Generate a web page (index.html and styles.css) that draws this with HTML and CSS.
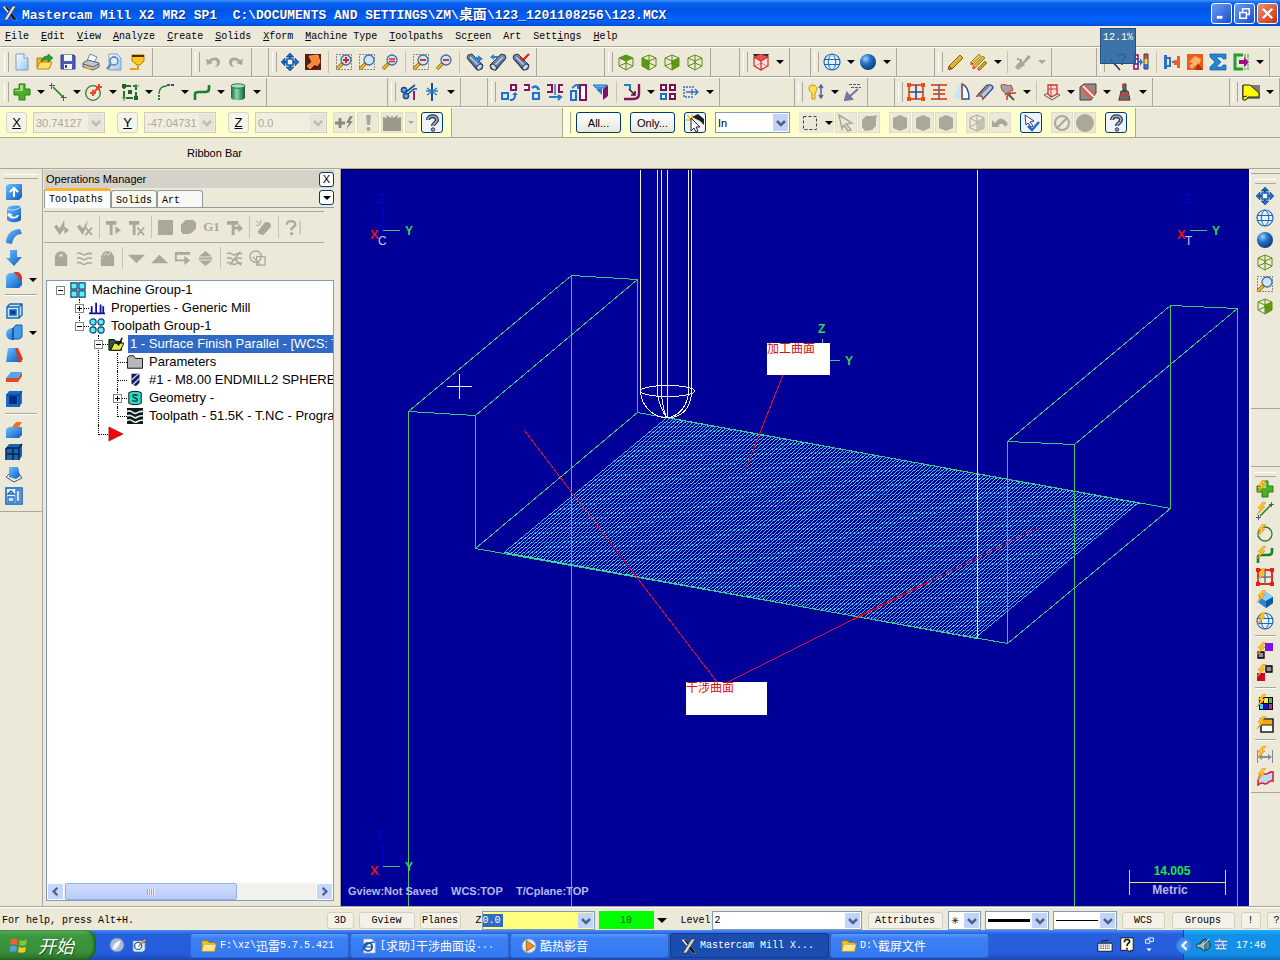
FILE: index.html
```html
<!DOCTYPE html>
<html lang="zh-CN">
  <head>
    <meta charset="utf-8">
    <meta name="viewport" content="width=device-width, initial-scale=1">
    <link rel="stylesheet" href="styles.css">
    <title>Mastercam Mill X2 MR2 SP1</title>
  </head>
  <body>
    <!-- icon sprite, every symbol is 18x18 -->
    <svg class="sprite" aria-hidden="true">
      <defs>
        <linearGradient id="gpage" x1="0" y1="0" x2="1" y2="1"><stop offset="0" stop-color="#fff"/><stop offset="1" stop-color="#9cc4f0"/></linearGradient>
        <radialGradient id="gball" cx=".35" cy=".3" r=".8"><stop offset="0" stop-color="#9fd0f8"/><stop offset=".4" stop-color="#2474c8"/><stop offset="1" stop-color="#06326e"/></radialGradient>
        <linearGradient id="gblue" x1="0" y1="0" x2="1" y2="1"><stop offset="0" stop-color="#6cc0ff"/><stop offset="1" stop-color="#0a5cc0"/></linearGradient>
        <linearGradient id="gcyl" x1="0" y1="0" x2="1" y2="0"><stop offset="0" stop-color="#0c6c3c"/><stop offset=".4" stop-color="#8cd4a8"/><stop offset="1" stop-color="#0c5c34"/></linearGradient>
        <linearGradient id="gpen" x1="0" y1="0" x2="1" y2="1"><stop offset="0" stop-color="#ffe860"/><stop offset="1" stop-color="#b88400"/></linearGradient>
      </defs>
      <symbol id="new" viewBox="0 0 18 18"><path d="M3 1h8l4 4v12H3z" fill="url(#gpage)" stroke="#7a9ccc"/><path d="M11 1v4h4" fill="#fff" stroke="#7a9ccc"/></symbol>
      <symbol id="open" viewBox="0 0 18 18"><path d="M1 15V5h5l1 2h7v8z" fill="#f0b828" stroke="#b07c10"/><path d="M1 16l3-7h12l-3 7z" fill="#ffe070" stroke="#c08c18"/><path d="M5 9c1-5 4-6 7-6V1l5 4-5 4V6c-3 0-5 1-7 3z" fill="#30a030" stroke="#186818" stroke-width=".6"/></symbol>
      <symbol id="save" viewBox="0 0 18 18"><path d="M2 2h13l1 1v13H2z" fill="#5058b8" stroke="#303890"/><path d="M5 2h8v6H5zM5 11h8v5H5z" fill="#f4f6ff"/><path d="M6 12h2v3H6z" fill="#303890"/></symbol>
      <symbol id="print" viewBox="0 0 18 18"><path d="M5 8l3-7 7 3-3 6z" fill="#fff" stroke="#6888b8"/><path d="M1 10l5-3 11 3v4l-6 3-10-3z" fill="#c0c4cc" stroke="#585c68"/><path d="M1 11l10 3 6-3" fill="none" stroke="#585c68"/><path d="M3 14l6 2" stroke="#f0b020" stroke-width="1.5"/></symbol>
      <symbol id="preview" viewBox="0 0 18 18"><path d="M4 1h8l4 4v12H4z" fill="url(#gpage)" stroke="#7a9ccc"/><circle cx="9" cy="8" r="4" fill="#d8ecff" stroke="#4878a8" stroke-width="1.3"/><path d="M6 11l-4 5" stroke="#6888a8" stroke-width="2.5"/></symbol>
      <symbol id="plug" viewBox="0 0 18 18"><path d="M4 2h12v6l-4 4H9L4 8z" fill="#ffc820" stroke="#c07800"/><path d="M4 2h12v2H4z" fill="#503000"/><path d="M10 12v4H2" fill="none" stroke="#e8a010" stroke-width="2"/></symbol>
      <symbol id="undo" viewBox="0 0 18 18"><path d="M2 6l1 6 6-2-2-1c3-3 6-2 6 1 0 2-1 3-3 4 5 0 6-3 6-5 0-5-7-6-11-2z" fill="#aca899"/></symbol>
      <symbol id="redo" viewBox="0 0 18 18"><path d="M16 6l-1 6-6-2 2-1c-3-3-6-2-6 1 0 2 1 3 3 4-5 0-6-3-6-5 0-5 7-6 11-2z" fill="#aca899"/></symbol>
      <symbol id="fit" viewBox="0 0 18 18"><path d="M9 0l4 4H5zM9 18l4-4H5zM0 9l4-4v8zM18 9l-4-4v8zM8 3h2v3H8zM8 12h2v3H8zM3 8h3v2H3zM12 8h3v2h-3z" fill="#1c74d0" stroke="#0c3c80" stroke-width=".6"/><path d="M6 6h6v6H6z" fill="#f0f8ff" stroke="#1860b8" stroke-width="1.600"/></symbol>
      <symbol id="repaint" viewBox="0 0 18 18"><rect x="1" y="1" width="16" height="16" fill="#5c1c10"/><path d="M5 3l9-1 2 7-3 4-2-2-5 5-3-3 5-4z" fill="#ff8430" stroke="#ffc090" stroke-width=".6"/></symbol>
      <symbol id="glass" viewBox="0 0 18 18"><circle cx="11" cy="7" r="5" fill="#cce6fc" stroke="#4070a8" stroke-width="1.3"/><path d="M8 10l-6 6" stroke="#8c6410" stroke-width="3.4"/><path d="M7 11l-5 5" stroke="#f4b838" stroke-width="2"/></symbol>
      <symbol id="dots" viewBox="0 0 18 18"><path d="M1.500 1.500h15v15h-15z" fill="none" stroke="#202840" stroke-dasharray="1 2"/></symbol>
      <symbol id="zwin" viewBox="0 0 18 18"><use href="#dots"/><use href="#glass"/><path d="M8 7h6M11 4v6" stroke="#e02020" stroke-width="2"/></symbol>
      <symbol id="ztar" viewBox="0 0 18 18"><use href="#dots"/><use href="#glass"/></symbol>
      <symbol id="zprev" viewBox="0 0 18 18"><use href="#glass"/><path d="M8 6h6M8 8.500h6" stroke="#e02020" stroke-width="1.500"/></symbol>
      <symbol id="zout" viewBox="0 0 18 18"><use href="#dots"/><use href="#glass"/><path d="M8 7h6" stroke="#e03020" stroke-width="2"/></symbol>
      <symbol id="zhalf" viewBox="0 0 18 18"><use href="#glass"/><path d="M8 7h6" stroke="#e03020" stroke-width="2"/></symbol>
      <symbol id="scope" viewBox="0 0 18 18"><path d="M1 5l1-3 4-1 11 11-1 4-5 1z" fill="#6c84a8" stroke="#303c50"/><path d="M4 4l8 8" stroke="#b8cce4" stroke-width="1.500"/><path d="M2 6l9 10" stroke="#3c5074" stroke-width="1.500"/><ellipse cx="13.500" cy="14" rx="3.300" ry="2.300" transform="rotate(-45 13.500 14)" fill="#c4dcf4" stroke="#303c50"/></symbol>
      <symbol id="scope1" viewBox="0 0 18 18"><use href="#scope"/><path d="M8 4h4V2l5 4-5 3V7H9z" fill="#2880d8"/></symbol>
      <symbol id="scope2" viewBox="0 0 18 18"><use href="#scope" transform="matrix(-1 0 0 1 18 0)"/><path d="M9 3H5V1L1 4l4 3V5h4z" fill="#2880d8"/></symbol>
      <symbol id="scope3" viewBox="0 0 18 18"><use href="#scope"/><path d="M8 4l3 3 6-6" fill="none" stroke="#d02010" stroke-width="2"/></symbol>
      <symbol id="wire" viewBox="0 0 18 18"><path d="M2 5l7-3 7 3v8l-7 4-7-4zM2 5l7 3 7-3M9 8v9M9 2v8M2 13l7-3 7 3" fill="none" stroke="#5c8c14"/></symbol>
      <symbol id="ctop" viewBox="0 0 18 18"><path d="M2 5l7-3 7 3-7 3z" fill="#5c9c10"/><use href="#wire"/></symbol>
      <symbol id="cfront" viewBox="0 0 18 18"><path d="M2 5l7 3v9l-7-4z" fill="#5c9c10"/><use href="#wire"/></symbol>
      <symbol id="cright" viewBox="0 0 18 18"><path d="M16 5L9 8v9l7-4z" fill="#5c9c10"/><use href="#wire"/></symbol>
      <symbol id="cred" viewBox="0 0 18 18"><path d="M1 1h16l-2 4H3z" fill="#303030"/><path d="M2 4l7-3 7 3-7 4z" fill="#f05050"/><path d="M2 4l7 4 7-4v9l-7 4-7-4zM9 8v9" fill="#fbe0dc" stroke="#c83030" stroke-width="1.2"/><path d="M3 13l6-3 6 3" fill="none" stroke="#c83030" stroke-dasharray="1 1"/></symbol>
      <symbol id="globe" viewBox="0 0 18 18"><circle cx="9" cy="9" r="8" fill="#e4f0fc" stroke="#1c68b8" stroke-width="1.2"/><path d="M1 6.500h16M1 11.500h16M9 1c-5 3-5 13 0 16M9 1c5 3 5 13 0 16" fill="none" stroke="#1c68b8"/></symbol>
      <symbol id="ball" viewBox="0 0 18 18"><circle cx="9" cy="9" r="8" fill="url(#gball)"/></symbol>
      <symbol id="pencil" viewBox="0 0 18 18"><path d="M2 13L13 2l3 3L5 16z" fill="url(#gpen)" stroke="#806000"/><path d="M2 13l3 3-3 1-1-1z" fill="#e05848" stroke="#802018" stroke-width=".6"/></symbol>
      <symbol id="pencils" viewBox="0 0 18 18"><path d="M1 9l8-8 2 2-8 8zM3 13L13 3l2 2L5 15zM8 15l7-7 2 2-7 7z" fill="url(#gpen)" stroke="#806000" stroke-width=".7"/><path d="M1 9l2 2-2 1zM3 13l2 2-2 1zM8 15l2 2-2 0z" fill="#e04838" stroke="#e04838"/></symbol>
      <symbol id="brush" viewBox="0 0 18 18"><path d="M1 14l6-7 2 2 5-7 3 2-7 7 1 2H9l-5 4z" fill="#aca899"/><path d="M5 7h3M3 6h2" stroke="#aca899" stroke-width="2"/></symbol>
      <symbol id="anpos" viewBox="0 0 18 18"><path d="M1 6l10 11M9 4c1-4 7-4 7 0 0 3-3 2-3 5M12 11h2" fill="none" stroke="#283858" stroke-width="1.6"/></symbol>
      <symbol id="match" viewBox="0 0 18 18"><path d="M2 2h4v14H2zM2 6h4M2 11h4" fill="#fff" stroke="#801060" stroke-width="1.5"/><path d="M12 1h4v5h-4z" fill="#f04030"/><path d="M12 6h4v5h-4z" fill="#f8e030"/><path d="M12 11h4v5h-4z" fill="#3080e0"/><path d="M12 1h4v15h-4z" fill="none" stroke="#304060"/><path d="M6 8h2V5l3 4-3 4v-3H6z" fill="#2878d0"/></symbol>
      <symbol id="hmark" viewBox="0 0 18 18"><path d="M1 2h3v14H1zM4 4h4v2H4zM4 12h4v2H4z" fill="#2c70c8"/><path d="M7 6v6M9 9h4" stroke="#2c70c8" stroke-width="2"/><path d="M14 3h3v12h-3v-3h-3V7h3z" fill="#e86030"/></symbol>
      <symbol id="fox" viewBox="0 0 18 18"><rect x="1" y="1" width="16" height="16" fill="#e85c18"/><path d="M3 9l6-6 6 3-2 7-3-1-4 4-3-3 4-3z" fill="#ffb068"/><path d="M12 10l5 7H9z" fill="#b83008"/></symbol>
      <symbol id="sigma" viewBox="0 0 18 18"><path d="M1 1h16v5h-3l-1-2H7l5 5-5 5h6l1-2h3v5H1v-3l5-5-5-5z" fill="#2484d8" stroke="#1058a8" stroke-width=".7"/></symbol>
      <symbol id="ebox" viewBox="0 0 18 18"><path d="M11 2H3v14h8" fill="none" stroke="#20a030" stroke-width="3"/><path d="M12 2h5M12 16h5M16 3v4M16 11v4M13 3v3M13 12v3" stroke="#20a030" stroke-dasharray="2 1"/><path d="M7 7h5V4l5 5-5 5v-3H7z" fill="#a01080"/></symbol>
      <symbol id="plus" viewBox="0 0 18 18"><path d="M6 1h6v5h5v6h-5v5H6v-5H1V6h5z" fill="#4caf2c" stroke="#2c7c14"/><path d="M7 2h3v6H2V7h5z" fill="#a4e080"/></symbol>
      <symbol id="line" viewBox="0 0 18 18"><path d="M4 4l10 10" stroke="#208020" stroke-width="1.600"/><path d="M0 2.500h6M2.500 0v6M12 14.500h6M14.500 12v6" stroke="#505878"/></symbol>
      <symbol id="circ" viewBox="0 0 18 18"><circle cx="8" cy="10" r="7.3" fill="none" stroke="#2c7c2c" stroke-width="1.3"/><path d="M8 7v6M5 10h6M14 1v6M11 4h6M8 10l6-6" stroke="#f04420" stroke-width="2"/></symbol>
      <symbol id="rect" viewBox="0 0 18 18"><path d="M3 3h12v12H3z" fill="none" stroke="#187828" stroke-width="2" stroke-dasharray="7 2"/><path d="M1 1h4v4H1zM13 13h4v4h-4zM7 7h4v4H7z" fill="#206030"/><path d="M1 15h5M3 13v5M13 3h5M15 1v4" stroke="#409040"/></symbol>
      <symbol id="fillet" viewBox="0 0 18 18"><path d="M2 17v-6" stroke="#208030" stroke-width="2" stroke-dasharray="2 1"/><path d="M2 11c0-5 3-8 8-8" fill="none" stroke="#208030" stroke-width="1.300"/><path d="M10 2h8" stroke="#30509c" stroke-width="2" stroke-dasharray="3 1"/></symbol>
      <symbol id="spline" viewBox="0 0 18 18"><path d="M2 17v-6c0-2 2-2 4-2h6c3 0 4-1 4-3V2" fill="none" stroke="#188028" stroke-width="2.6"/></symbol>
      <symbol id="cyl" viewBox="0 0 18 18"><path d="M2 3v12c2 3 12 3 14 0V3z" fill="url(#gcyl)"/><ellipse cx="9" cy="3" rx="7" ry="2.2" fill="#a8e0b8" stroke="#207848"/></symbol>
      <symbol id="trim" viewBox="0 0 18 18"><circle cx="4" cy="7" r="2.6" fill="#70a8e0" stroke="#184c98" stroke-width="1.5"/><circle cx="6" cy="13" r="2.6" fill="#70a8e0" stroke="#184c98" stroke-width="1.5"/><path d="M6 9l9-7M8 11l6-5h3" stroke="#184c98" stroke-width="1.6" fill="none"/><path d="M14 8v9" stroke="#902070" stroke-width="2"/></symbol>
      <symbol id="brk" viewBox="0 0 18 18"><path d="M9 0v18" stroke="#184c98" stroke-width="2"/><path d="M4 5l10 7M14 5L4 12M3 8h12" stroke="#3080c8" stroke-width="1.4"/></symbol>
      <symbol id="xmove" viewBox="0 0 18 18"><path d="M2 10h6v6H2z" fill="#d8ecff" stroke="#1c70d0" stroke-width="2"/><path d="M11 2h5v5h-5z" fill="#fff" stroke="#881060" stroke-width="2"/><path d="M10 16c4 0 4-2 4-4h-2l3-3 3 3h-2c0 4-2 6-6 6z" fill="#1c70d0"/></symbol>
      <symbol id="xrot" viewBox="0 0 18 18"><path d="M1 2h5v5H1" fill="#fff" stroke="#881060" stroke-width="1.8"/><path d="M10 10h6v6h-6z" fill="#d8ecff" stroke="#1c70d0" stroke-width="2"/><path d="M9 5c3-3 6-1 7 2" fill="none" stroke="#2878d0" stroke-width="2.5"/></symbol>
      <symbol id="xmir" viewBox="0 0 18 18"><path d="M1 2h5v7H1M17 2h-4v7h4" fill="none" stroke="#881060" stroke-width="2"/><path d="M9 1v11" stroke="#2878d0" stroke-width="1.5"/><path d="M3 14h11M12 12l3 2-3 3" stroke="#2878d0" stroke-width="2" fill="none"/></symbol>
      <symbol id="xscale" viewBox="0 0 18 18"><path d="M2 8h5v9H2z" fill="#d8ecff" stroke="#1c70d0" stroke-width="2"/><path d="M11 2h6v15h-6z" fill="#fff" stroke="#881060" stroke-width="2"/><path d="M3 5l4-3h2v4" fill="none" stroke="#2878d0" stroke-width="2"/></symbol>
      <symbol id="xoff" viewBox="0 0 18 18"><path d="M1 2h14l-4 3H4z" fill="#60b0f0" stroke="#1c70d0"/><path d="M4 6l6-1v7z" fill="#2878d0"/><path d="M11 6l5-4v11l-5 4z" fill="#801070"/></symbol>
      <symbol id="xroll" viewBox="0 0 18 18"><path d="M1 2h6v5" fill="none" stroke="#2878d0" stroke-width="2"/><path d="M16 1v10c0 4-3 5-6 5H1" fill="none" stroke="#881060" stroke-width="2.4"/><path d="M6 6l6 6M12 8v4H8" fill="none" stroke="#501040" stroke-width="1.6"/></symbol>
      <symbol id="xarr" viewBox="0 0 18 18"><path d="M2 2h5v5H2zM11 2h5v5h-5zM11 11h5v5h-5z" fill="#fff" stroke="#781050" stroke-width="2"/><path d="M2 11h5v5H2z" fill="#fff" stroke="#1c70d0" stroke-width="2"/></symbol>
      <symbol id="xdrag" viewBox="0 0 18 18"><path d="M12 4H2v10h10" fill="none" stroke="#3070c0" stroke-width="1.5" stroke-dasharray="2 1"/><path d="M4 9h12M13 6l3 3-3 3M10 6v6" fill="none" stroke="#3070c0" stroke-width="1.3"/></symbol>
      <symbol id="bulb" viewBox="0 0 18 18"><path d="M5 2c6 0 6 5 3 8v6H5v-6C1 8 1 2 5 2z" fill="#ffe050" stroke="#c09820"/><path d="M14 2v13M12 5l2-3 2 3M12 12l2 3 2-3" stroke="#5068a0" stroke-width="1.5" fill="none"/></symbol>
      <symbol id="arrdash" viewBox="0 0 18 18"><path d="M6 1.500h12M8 4.500h10" stroke="#485890" stroke-dasharray="3 1"/><path d="M15 6l-9 8M2 17l2-7 5 6z" fill="#7078a0" stroke="#7078a0" stroke-width="2"/></symbol>
      <symbol id="snet" viewBox="0 0 18 18"><path d="M2 2h14v14H2z" fill="none" stroke="#e06030" stroke-width="2"/><path d="M0 0h4v4H0zM14 0h4v4h-4zM0 14h4v4H0zM14 14h4v4h-4z" fill="#e05020"/><path d="M9 2v14M2 9h14" stroke="#2848a0" stroke-width="1.6"/></symbol>
      <symbol id="sruled" viewBox="0 0 18 18"><path d="M1 2h16M1 16h16M3 7h12M3 11h12" stroke="#e85828" stroke-width="2"/><path d="M9 1v16" stroke="#606890" stroke-width="1.6"/></symbol>
      <symbol id="srev" viewBox="0 0 18 18"><path d="M2 16C2 8 4 3 9 1c1 5 1 10 0 15z" fill="#c8e4f8"/><path d="M9 1c6 2 7 8 7 15H9z" fill="#fff" stroke="#2050a0" stroke-width="1.5"/><path d="M9 1v16" stroke="#e05020" stroke-width="1.5"/></symbol>
      <symbol id="ssweep" viewBox="0 0 18 18"><path d="M1 13L10 3c3-2 7-1 7 2L7 16c0-3-3-4-6-3z" fill="#a8d0f0" stroke="#284c88" stroke-width="1.3"/><path d="M4 12l9-9M7 16c0-3-3-4-6-3" fill="none" stroke="#d85030" stroke-width="1.5"/></symbol>
      <symbol id="strim" viewBox="0 0 18 18"><path d="M2 2c4-2 6 2 10 0l2 5c-3 1-4 3-7 4-2-2-5-3-5-9z" fill="#a0a4a8" stroke="#c04030"/><path d="M6 12c3-3 7-2 11-2M8 17c-1-5 3-7 7-7" stroke="#c04030" fill="none" stroke-width="1.5"/><path d="M10 12l5 5" stroke="#505860" stroke-width="2"/></symbol>
      <symbol id="m1" viewBox="0 0 18 18"><path d="M1 12l8-4 8 4-8 5z" fill="#e0e0d8" stroke="#606060"/><path d="M5 2h9v9l-6 3-3-3z" fill="#f8e0d8" stroke="#c83828" stroke-width="1.3"/><path d="M5 6h9M8 2v11" stroke="#c83828"/></symbol>
      <symbol id="m2" viewBox="0 0 18 18"><path d="M1 4l4-3h12v9l-5 7H1z" fill="#8c8c88" stroke="#404040"/><path d="M2 4l10 12M6 3l10 9" stroke="#e85c50" stroke-width="2.4"/><path d="M4 3l11 11" stroke="#fff" stroke-width="1.5"/></symbol>
      <symbol id="m3" viewBox="0 0 18 18"><path d="M8 1h3v7H8zM6 8h7l2 9H4z" fill="#686c70" stroke="#383838"/><path d="M5 12h9M8 1v4" stroke="#d83828" stroke-width="1.6"/><path d="M3 17h12" stroke="#d83828"/></symbol>
      <symbol id="mtool" viewBox="0 0 18 18"><rect width="18" height="14" y="2" fill="#7c7c7c"/><path d="M1 2h7l9 8v4H6l-2 3H1z" fill="#ffff00" stroke="#202020"/><path d="M1 14l4-1" stroke="#202020"/></symbol>
      <!-- disabled glyphs of the ribbon and the operations toolbar -->
      <symbol id="gfast" viewBox="0 0 18 18"><path d="M5 4v10M0 9h10" stroke="#8c897c" stroke-width="3"/><path d="M15 2l-4 7h3l-3 7 7-9h-3l3-5z" fill="#8c897c"/></symbol>
      <symbol id="gexc" viewBox="0 0 18 18"><path d="M7 1h5l-1 10H8z" fill="#aca899"/><circle cx="9.500" cy="15" r="2" fill="#aca899"/></symbol>
      <symbol id="gblk" viewBox="0 0 18 18"><path d="M0 3l4 1-1-3 5 3 1-3 1 3 5-3-1 3 4-1v14H0z" fill="#9c998a"/></symbol>
      <symbol id="quest" viewBox="0 0 18 18"><path d="M5 6c0-5 9-5 9 0 0 3-4 3-4 6" fill="none" stroke="#283048" stroke-width="4"/><path d="M5 6c0-5 9-5 9 0 0 3-4 3-4 6" fill="none" stroke="#a8b0c0" stroke-width="1.6"/><circle cx="10" cy="15.500" r="1.700" fill="#a8b0c0" stroke="#283048"/></symbol>
      <symbol id="magic" viewBox="0 0 18 18"><path d="M6 3l6-3 6 5v6l-4-4z" fill="#202020"/><path d="M1 1l5 5M6 0v5M0 6h5" stroke="#f0c020" stroke-width="1.5"/><path d="M5 4l9 9h-4l2 4-2 1-2-4-3 3z" fill="#fff" stroke="#202020"/></symbol>
      <symbol id="gbox" viewBox="0 0 18 18"><path d="M2.500 2.500h13v13h-13z" fill="none" stroke="#404040" stroke-dasharray="3 2"/></symbol>
      <symbol id="gcur" viewBox="0 0 18 18"><path d="M2 1l13 8-6 1 5 6-3 1-4-6-2 4z" fill="#ece9d8" stroke="#aca899" stroke-width="1.5"/></symbol>
      <symbol id="ghex" viewBox="0 0 18 18"><path d="M9 1l7 3v10l-7 3-7-3V4z" fill="#aca899"/></symbol>
      <symbol id="ghexp" viewBox="0 0 18 18"><path d="M6 2h7l4-1-1 4v7l-4 4-7 1-3-4V6z" fill="#aca899"/></symbol>
      <symbol id="gcube" viewBox="0 0 18 18"><path d="M9 1l7 3v10l-7 3-7-3V4zM9 8v9M2 4l7 4 7-4M9 1v8l-7 4" fill="none" stroke="#aca899"/><path d="M9 8l7-4v10l-7 3z" fill="#c4c0b0"/></symbol>
      <symbol id="gback" viewBox="0 0 18 18"><path d="M1 13V6l3 3c5-7 9-5 13 1l-3 3c-2-4-4-4-7-1l2 1z" fill="#aca899"/></symbol>
      <symbol id="selok" viewBox="0 0 18 18"><path d="M3 1l9 6-4 1 3 4-2 1-3-4-2 2z" fill="#fff" stroke="#304060"/><path d="M6 12l4 4 7-8" fill="none" stroke="#2868c8" stroke-width="2.500"/></symbol>
      <symbol id="gno" viewBox="0 0 18 18"><circle cx="9" cy="9" r="7" fill="none" stroke="#aca899" stroke-width="2"/><path d="M4 14L14 4" stroke="#aca899" stroke-width="2"/></symbol>
      <symbol id="gdot" viewBox="0 0 18 18"><circle cx="9" cy="9" r="9" fill="#aca899"/></symbol>
      <symbol id="ochk" viewBox="0 0 18 18"><path d="M1 8l3-2 3 4 5-9v9l-5 7zM12 8l5 4-5 4z" fill="#aca899"/></symbol>
      <symbol id="ochx" viewBox="0 0 18 18"><path d="M1 8l3-2 3 4 6-9-3 9-3 7z" fill="#aca899"/><path d="M10 9l7 8M17 9l-7 8" stroke="#aca899" stroke-width="2"/></symbol>
      <symbol id="otp" viewBox="0 0 18 18"><path d="M1 2h11v4H8v11H5V6H1zM11 8l6 4-6 4z" fill="#aca899"/></symbol>
      <symbol id="otx" viewBox="0 0 18 18"><path d="M1 2h11v4H8v11H5V6H1z" fill="#aca899"/><path d="M10 9l7 8M17 9l-7 8" stroke="#aca899" stroke-width="2"/></symbol>
      <symbol id="osq" viewBox="0 0 18 18"><path d="M1 1h16v16H1z" fill="#aca899"/></symbol>
      <symbol id="ocut" viewBox="0 0 18 18"><path d="M1 6l5-5h8l3 3v6l-4 4-3 2H3l-2-3z" fill="#aca899"/></symbol>
      <symbol id="otr" viewBox="0 0 18 18"><path d="M1 2h12v4H9v11H6V6H1zM9 8h4V5l5 5-5 4v-3H9z" fill="#aca899"/></symbol>
      <symbol id="oedit" viewBox="0 0 18 18"><path d="M3 13l8-10 5 1 1 4-8 9-5-1z" fill="#aca899"/><path d="M1 2l4 3M1 7l5-1M6 1v4" stroke="#aca899"/></symbol>
      <symbol id="oq" viewBox="0 0 18 18"><path d="M3 6c0-5 9-5 9 0 0 3-5 2-4 6" fill="none" stroke="#aca899" stroke-width="2.500"/><path d="M17 2v14" stroke="#aca899"/><circle cx="8" cy="15.500" r="1.700" fill="#aca899"/></symbol>
      <symbol id="olock" viewBox="0 0 18 18"><path d="M2 17V8c0-9 13-9 13 0v9z" fill="#aca899"/><path d="M6 7c1-4 4-4 5 0z" fill="#e0dccc"/></symbol>
      <symbol id="owave" viewBox="0 0 18 18"><path d="M1 4c4-3 6 3 9 1s4-2 7-1M1 9c4-3 6 3 9 1s4-2 7-1M1 14c4-3 6 3 9 1s4-2 7-1" fill="none" stroke="#aca899" stroke-width="1.600"/></symbol>
      <symbol id="owavex" viewBox="0 0 18 18"><use href="#owave"/><path d="M15 2L4 16M9 9l7 7" stroke="#aca899" stroke-width="1.600"/></symbol>
      <symbol id="oghost" viewBox="0 0 18 18"><path d="M2 17V7l3-5 4-1 4 1 3 5v10z" fill="#aca899"/><path d="M5 6l3-3M9 6l3-3M3 9l1-1" stroke="#fff"/></symbol>
      <symbol id="odn" viewBox="0 0 18 18"><path d="M0 5h18l-9 9z" fill="#aca899"/></symbol>
      <symbol id="oup" viewBox="0 0 18 18"><path d="M0 14h18L9 5z" fill="#aca899"/></symbol>
      <symbol id="oins" viewBox="0 0 18 18"><path d="M2 3v8h10" fill="none" stroke="#aca899" stroke-width="2"/><path d="M11 6l6 5-6 5zM1 2h16v3H1z" fill="#aca899"/></symbol>
      <symbol id="oscr" viewBox="0 0 18 18"><path d="M2 7l7-6 7 6zM2 11l7 6 7-6zM2 8h14v2H2z" fill="#aca899"/></symbol>
      <symbol id="oov" viewBox="0 0 18 18"><circle cx="7" cy="7" r="6" fill="none" stroke="#aca899" stroke-width="1.500"/><path d="M8 7h9v9H8zM4 7l8 9" fill="none" stroke="#aca899" stroke-width="1.300"/></symbol>
      <!-- solids -->
      <symbol id="sext" viewBox="0 0 18 18"><path d="M1 3l3-2h13v13l-3 3H1z" fill="url(#gblue)"/><path d="M9 14V6M5 9l4-4 4 4" fill="none" stroke="#fff" stroke-width="2"/></symbol>
      <symbol id="srevo" viewBox="0 0 18 18"><path d="M2 3c4-3 11-3 14-1v13c-4 3-10 3-14 0z" fill="url(#gblue)"/><path d="M4 10c2 4 8 3 9 0M3 11l1-2 3 1" fill="none" stroke="#fff" stroke-width="1.800"/><path d="M2 4c4 2 10 1 14-2" stroke="#c8e4ff" fill="none"/></symbol>
      <symbol id="sswp" viewBox="0 0 18 18"><path d="M1 16C1 7 7 2 15 2l2 5c-6 0-9 4-10 10z" fill="url(#gblue)"/></symbol>
      <symbol id="sloft" viewBox="0 0 18 18"><path d="M5 1h7v7h5l-8 9-8-8h4z" fill="url(#gblue)"/></symbol>
      <symbol id="sfil" viewBox="0 0 18 18"><path d="M1 5l3-3h10l3 5v7l-3 3H1z" fill="url(#gblue)"/><path d="M8 1h5c3 1 4 4 4 7l-3 2c0-4-2-7-6-9z" fill="#e03020"/></symbol>
      <symbol id="sshl" viewBox="0 0 18 18"><path d="M2 5l3-3h12v11l-3 3H2zM2 5h12v11M14 5l3-3" fill="#cce6ff" stroke="#1868b8" stroke-width="1.400"/><path d="M5 8h6v5H5z" fill="#083c90" stroke="#1868b8" stroke-width="1.500"/></symbol>
      <symbol id="sbool" viewBox="0 0 18 18"><circle cx="7" cy="10" r="6" fill="url(#gblue)"/><path d="M8 4l3-3h6v12l-3 2H8z" fill="#409ce8" stroke="#1060b0"/><path d="M8 4v12" stroke="#083c80"/></symbol>
      <symbol id="sdraft" viewBox="0 0 18 18"><path d="M3 2h8l6 14H1z" fill="url(#gblue)"/><path d="M10 2l3 0 5 11-4 4z" fill="#d83828"/></symbol>
      <symbol id="sthk" viewBox="0 0 18 18"><path d="M6 4h11l-4 6H1z" fill="#50a8f0"/><path d="M1 10h12l4-6v4l-4 6H1z" fill="#e04828"/></symbol>
      <symbol id="schk" viewBox="0 0 18 18"><path d="M1 5l3-4h13v12l-3 4H1z" fill="#186cc8"/><path d="M4 6h8v8H4z" fill="#042c80"/><path d="M1 5h13v12M14 5l3-4" fill="none" stroke="#083878"/></symbol>
      <symbol id="slift" viewBox="0 0 18 18"><path d="M1 8l3-2h13v8l-3 3H1z" fill="url(#gblue)"/><path d="M7 6l4-5h6l-4 6z" fill="#f07028"/></symbol>
      <symbol id="sgrid" viewBox="0 0 18 18"><path d="M1 5l3-4h13v12l-3 4H1z" fill="#1c64b0"/><path d="M1 5h13v12M14 5l3-4M8 5v12M1 11h13M1 5v12" fill="none" stroke="#06264c" stroke-width="1.500"/></symbol>
      <symbol id="sdwn" viewBox="0 0 18 18"><path d="M4 9l-3 3 8 5 8-4-3-4" fill="none" stroke="#405c80"/><path d="M4 2h9l2 9-4 3-7-2z" fill="url(#gblue)"/></symbol>
      <symbol id="slay" viewBox="0 0 18 18"><rect x="1" y="1" width="16" height="16" fill="#e8f4ff" stroke="#1868c0" stroke-width="1.600"/><path d="M3 10h6v5H3zM3 7l3-3 3 3zM11 3h4v12h-4z" fill="#c8e4fc" stroke="#1868c0" stroke-width="1.300"/></symbol>
      <!-- lightning prefix, used over the quick toolbar -->
      <symbol id="bolt" viewBox="0 0 18 18"><path d="M7 0L2 6h3l-4 7 8-8H6l4-5z" fill="#ffd020" stroke="#d88020" stroke-width=".6"/></symbol>
      <symbol id="qplus" viewBox="0 0 18 18"><use href="#plus"/><use href="#bolt"/></symbol>
      <symbol id="qline" viewBox="0 0 18 18"><path d="M4 14L15 3" stroke="#208020" stroke-width="1.500"/><path d="M0 15.500h5M2.500 13v5M13 2.500h5M15.500 0v5" stroke="#505878"/><use href="#bolt"/></symbol>
      <symbol id="qcirc" viewBox="0 0 18 18"><circle cx="9" cy="10" r="7" fill="none" stroke="#2c7c2c" stroke-width="1.300"/><use href="#bolt"/></symbol>
      <symbol id="qspl" viewBox="0 0 18 18"><use href="#spline"/><use href="#bolt"/></symbol>
      <symbol id="qnet" viewBox="0 0 18 18"><path d="M2 2h14v14H2z" fill="none" stroke="#e02828" stroke-width="2"/><path d="M0 0h4v4H0zM14 0h4v4h-4zM0 14h4v4H0zM14 14h4v4h-4z" fill="#e02020"/><path d="M9 2v14M2 9h14" stroke="#707070" stroke-width="1.500"/><use href="#bolt"/></symbol>
      <symbol id="qsol" viewBox="0 0 18 18"><path d="M3 7l7-5 7 5v6l-7 5-7-5z" fill="#2c84d8"/><path d="M3 7l7-5 7 5-7 4z" fill="#90ccf8"/><path d="M10 11l7-4v6l-7 5z" fill="#1058a8"/><use href="#bolt"/></symbol>
      <symbol id="qglobe" viewBox="0 0 18 18"><use href="#globe"/><use href="#bolt"/></symbol>
      <symbol id="qc1" viewBox="0 0 18 18"><path d="M9 1h8v8H9z" fill="#8010f0"/><path d="M2 10h6v6H2z" fill="#909090" stroke="#000" stroke-width="1.300"/><use href="#bolt"/></symbol>
      <symbol id="qc2" viewBox="0 0 18 18"><path d="M10 2h6v6h-6z" fill="#909090" stroke="#000" stroke-width="1.300"/><path d="M1 9h8v8H1z" fill="#c80828"/><use href="#bolt"/></symbol>
      <symbol id="qpal" viewBox="0 0 18 18"><path d="M3 3h14v13H3z" fill="#000"/><path d="M4 4h3v5H4z" fill="#f04000"/><path d="M8 4h4v5H8z" fill="#f8f040"/><path d="M13 4h3v5h-3z" fill="#50c830"/><path d="M4 10h3v5H4z" fill="#30d8f0"/><path d="M8 10h4v5H8z" fill="#1010e0"/><path d="M13 10h3v5h-3z" fill="#c020c0"/><use href="#bolt"/></symbol>
      <symbol id="qlev" viewBox="0 0 18 18"><path d="M5 3h12v13H5z" fill="#fff" stroke="#202020" stroke-width="1.600"/><path d="M6 4h10v5H6z" fill="#f8a810"/><path d="M5 9h12" stroke="#202020"/><use href="#bolt"/></symbol>
      <symbol id="qdim" viewBox="0 0 18 18"><path d="M1.500 4v13M16.500 4v13" stroke="#808898"/><path d="M2 11l4-3v2h6V8l4 3-4 3v-2H6v2z" fill="#8090a8"/><use href="#bolt"/></symbol>
      <symbol id="qsurf" viewBox="0 0 18 18"><path d="M2 14c0-5 3-9 7-8 3 1 4-3 8-2v9c-3-2-4 3-8 3-3-2-5-1-7 1z" fill="#b8dcf8" stroke="#d82038" stroke-width="1.600"/><use href="#bolt"/></symbol>
      <!-- tree -->
      <symbol id="tgrp" viewBox="0 0 18 18"><path d="M1 1h7v7H1zM10 1h7v7h-7zM1 10h7v7H1zM10 10h7v7h-7z" fill="#60f0f8" stroke="#084068" stroke-width="1.300"/></symbol>
      <symbol id="tprop" viewBox="0 0 18 18"><path d="M0 15h18M3 15V7M8 15V3M13 15V5M16 15V7" stroke="#1010a0" stroke-width="2"/></symbol>
      <symbol id="ttp" viewBox="0 0 18 18"><g fill="#60e8f8" stroke="#084068" stroke-width="1.300"><circle cx="4.500" cy="4.500" r="3.500"/><circle cx="13.500" cy="4.500" r="3.500"/><circle cx="4.500" cy="13.500" r="3.500"/><circle cx="13.500" cy="13.500" r="3.500"/></g></symbol>
      <symbol id="tfold" viewBox="0 0 18 18"><path d="M1 16V4h6l2 2h6v10z" fill="#305830" stroke="#000"/><path d="M3 16l4-8h11l-4 8z" fill="#e8e840" stroke="#000"/><path d="M9 7l3 3 4-8" fill="none" stroke="#000" stroke-width="1.600"/></symbol>
      <symbol id="tpar" viewBox="0 0 18 18"><path d="M0.500 16V4l2-2h5l2 3h8v11z" fill="#b8b8b8" stroke="#000"/></symbol>
      <symbol id="ttool" viewBox="0 0 18 18"><path d="M5 2h9v10l-4 4-5-3z" fill="#101860"/><path d="M5 9l8-7M7 14l7-7" stroke="#d0d0e8" stroke-width="1.500"/></symbol>
      <symbol id="tgeo" viewBox="0 0 18 18"><path d="M2 3c3-2 11-2 14 0v12c-3 2-11 2-14 0z" fill="#30d8c8" stroke="#000"/><path d="M12 6c-6-2-7 2-3 3s4 5-3 3" fill="none" stroke="#003838" stroke-width="1.500"/></symbol>
      <symbol id="twave" viewBox="0 0 18 18"><path d="M0 0h18v18H0z" fill="#101818"/><path d="M0 4c5-3 7 3 10 2s4-3 8-2M0 9c5-3 7 3 10 2s4-3 8-2M0 14c5-3 7 3 10 2s4-3 8-2" fill="none" stroke="#e0f0f0" stroke-width="1.800"/></symbol>
      <symbol id="tarr" viewBox="0 0 18 18"><path d="M1 1l16 8-16 8z" fill="#f00808" stroke="#700" stroke-width=".6"/></symbol>
      <!-- task bar -->
      <symbol id="mcx" viewBox="0 0 18 18"><path d="M1 2h5l11 15h-4z" fill="#101010" stroke="#a0a8b0" stroke-width=".6"/><path d="M16 1l-4 0L2 17h4z" fill="#d8dce0" stroke="#303030" stroke-width=".8"/><path d="M2 2l5 6" stroke="#fff" stroke-width="1.500"/></symbol>
      <symbol id="folder" viewBox="0 0 18 18"><path d="M1 15V3h6l2 2h7v10z" fill="#f0c040" stroke="#a07810"/><path d="M1 15l2-8h14l-2 8z" fill="#ffe890" stroke="#c09828" stroke-width=".8"/></symbol>
      <symbol id="ie" viewBox="0 0 18 18"><path d="M3 1h9l4 4v12H3z" fill="#fff" stroke="#90a0b8"/><circle cx="8" cy="10" r="4.500" fill="none" stroke="#1858b0" stroke-width="2.200"/><path d="M4 10h8M1 14C4 8 10 4 15 5" stroke="#1858b0" stroke-width="1.600" fill="none"/></symbol>
      <symbol id="media" viewBox="0 0 18 18"><circle cx="9" cy="9" r="8" fill="#d8ecf8" stroke="#7898b0"/><path d="M6 3l9 6-9 6z" fill="#f09020" stroke="#b05808"/></symbol>
      <symbol id="win" viewBox="0 0 18 18"><path d="M1 4c3-2 5-1 7 0L7 9C5 8 3 8 0 9z" fill="#f06028"/><path d="M10 4c2 1 4 1 7-1l-1 6c-3 1-5 1-7 0z" fill="#80c838"/><path d="M0 11c3-2 5-1 7 0l-1 5c-2-1-4-1-6 0z" fill="#50a0f0"/><path d="M9 11c2 1 4 1 7 0l-1 5c-3 1-5 1-7 0z" fill="#f8c828"/></symbol>
      <symbol id="bird" viewBox="0 0 18 18"><circle cx="9" cy="9" r="8" fill="#a8bcd8" stroke="#607ca8"/><path d="M4 14c0-6 5-9 9-10-1 5-3 9-7 10z" fill="#eef4fc"/></symbol>
      <symbol id="desk" viewBox="0 0 18 18"><path d="M2 4h11l3 3v8l-3 2H4l-2-2z" fill="#d8ecf8" stroke="#406c98"/><circle cx="8" cy="10" r="4" fill="#fff" stroke="#1868b0" stroke-width="1.500"/><path d="M8 11l7-9 2 2z" fill="#f0a870" stroke="#804020" stroke-width=".6"/></symbol>
      <symbol id="kbd" viewBox="0 0 18 18"><path d="M1 7h16v9H1z" fill="#fff" stroke="#101010"/><path d="M3 9h12M3 11h12M3 13h12" stroke="#101010" stroke-dasharray="1 1"/><path d="M5 6c0-4 4 0 8-3" stroke="#101010" fill="none"/></symbol>
      <symbol id="qm" viewBox="0 0 18 18"><path d="M2 1h14v14h-3v2l-3-2H2z" fill="#ffffe0" stroke="#101010"/><path d="M6 6c0-4 6-4 6-1 0 2-3 2-3 5M9 12v2" fill="none" stroke="#101010" stroke-width="1.800"/></symbol>
      <symbol id="lang" viewBox="0 0 18 18"><path d="M5 3h5v4H5zM8 3V1h6v4h-4" fill="none" stroke="#fff"/><path d="M6 13h6l-3 3z" fill="#fff"/></symbol>
      <symbol id="vol" viewBox="0 0 18 18"><circle cx="10" cy="9" r="6" fill="#508c88" stroke="#183c50"/><path d="M1 8h4l5-6v14l-5-4H1z" fill="#a0c0c8" stroke="#203c58"/><path d="M8 9l7-7" stroke="#e8f8f8"/></symbol>
      <symbol id="wall" viewBox="0 0 18 18"><path d="M2 2h14v10l-7 5-7-5z" fill="#3880d0"/><path d="M2 5h14M2 9h14M3 13h12M7 2v3M11 5v4M6 9v4M12 9v4" stroke="#d8ecff" stroke-width="1.300"/></symbol>
    </svg>

    <header class="title">
      <svg class="i"><use href="#mcx"/></svg>
      <h1>Mastercam Mill X2 MR2 SP1&nbsp; C:\DOCUMENTS AND SETTINGS\ZM\<span>桌面</span>\123_1201108256\123.MCX</h1>
      <button class="wb" title="Minimize"><svg viewBox="0 0 18 18"><path d="M4 13h6" stroke="#fff" stroke-width="3"/></svg></button>
      <button class="wb" title="Restore"><svg viewBox="0 0 18 18"><path d="M4 8h7v6H4zM7 7V4h7v6h-3" fill="none" stroke="#fff" stroke-width="1.600"/></svg></button>
      <button class="wb close" title="Close"><svg viewBox="0 0 18 18"><path d="M4 4l10 10M14 4L4 14" stroke="#fff" stroke-width="2.400"/></svg></button>
    </header>

    <nav class="menu">
      <a href="#"><u>F</u>ile</a><a href="#"><u>E</u>dit</a><a href="#"><u>V</u>iew</a><a href="#"><u>A</u>nalyze</a><a href="#"><u>C</u>reate</a><a href="#"><u>S</u>olids</a><a href="#"><u>X</u>form</a><a href="#"><u>M</u>achine Type</a><a href="#"><u>T</u>oolpaths</a><a href="#">Sc<u>r</u>een</a><a href="#">Art</a><a href="#">Sett<u>i</u>ngs</a><a href="#"><u>H</u>elp</a>
      <div class="meter">12.1%</div>
    </nav>

    <div class="bar bar1">
      <div class="grp">
        <button class="b" title="New"><svg><use href="#new"/></svg></button>
        <button class="b" title="Open"><svg><use href="#open"/></svg></button>
        <button class="b" title="Save"><svg><use href="#save"/></svg></button>
        <button class="b" title="Print"><svg><use href="#print"/></svg></button>
        <button class="b" title="Preview"><svg><use href="#preview"/></svg></button>
        <button class="b" title="Convert"><svg><use href="#plug"/></svg></button>
      </div>
      <div class="grp">
        <button class="b" title="Undo" disabled><svg><use href="#undo"/></svg></button>
        <button class="b" title="Redo" disabled><svg><use href="#redo"/></svg></button>
      </div>
      <div class="grp">
        <button class="b" title="Fit"><svg><use href="#fit"/></svg></button>
        <button class="b" title="Repaint"><svg><use href="#repaint"/></svg></button>
        <i class="sep"></i>
        <button class="b" title="Zoom window"><svg><use href="#zwin"/></svg></button>
        <button class="b" title="Zoom target"><svg><use href="#ztar"/></svg></button>
        <button class="b" title="Zoom previous"><svg><use href="#zprev"/></svg></button>
        <i class="sep"></i>
        <button class="b" title="Unzoom"><svg><use href="#zout"/></svg></button>
        <button class="b" title="Unzoom 0.8"><svg><use href="#zhalf"/></svg></button>
        <i class="sep"></i>
        <button class="b" title="Dynamic rotate"><svg><use href="#scope1"/></svg></button>
        <button class="b" title="Previous view"><svg><use href="#scope2"/></svg></button>
        <button class="b" title="Named views"><svg><use href="#scope3"/></svg></button>
      </div>
      <div class="grp">
        <button class="b" title="Top"><svg><use href="#ctop"/></svg></button>
        <button class="b" title="Front"><svg><use href="#cfront"/></svg></button>
        <button class="b" title="Right"><svg><use href="#cright"/></svg></button>
        <button class="b" title="Isometric"><svg><use href="#wire"/></svg></button>
      </div>
      <div class="grp">
        <button class="b d" title="Planes"><svg><use href="#cred"/></svg></button>
      </div>
      <div class="grp">
        <button class="b d" title="Wireframe"><svg><use href="#globe"/></svg></button>
        <button class="b d" title="Shaded"><svg><use href="#ball"/></svg></button>
      </div>
      <div class="grp">
        <button class="b" title="Delete"><svg><use href="#pencil"/></svg></button>
        <button class="b d" title="Delete duplicates"><svg><use href="#pencils"/></svg></button>
        <i class="sep"></i>
        <button class="b d" title="Undelete" disabled><svg><use href="#brush"/></svg></button>
      </div>
      <div class="grp">
        <button class="b" title="Analyze"><svg><use href="#anpos"/></svg></button>
        <button class="b" title="Match"><svg><use href="#match"/></svg></button>
        <i class="sep"></i>
        <button class="b" title="Tool manager"><svg><use href="#hmark"/></svg></button>
        <button class="b" title="Hide"><svg><use href="#fox"/></svg></button>
        <button class="b" title="Statistics"><svg><use href="#sigma"/></svg></button>
        <button class="b d" title="Run"><svg><use href="#ebox"/></svg></button>
      </div>
    </div>

    <div class="bar bar2">
      <div class="grp">
        <button class="b d" title="Point"><svg><use href="#plus"/></svg></button>
        <button class="b d" title="Line"><svg><use href="#line"/></svg></button>
        <button class="b d" title="Arc"><svg><use href="#circ"/></svg></button>
        <button class="b d" title="Rectangle"><svg><use href="#rect"/></svg></button>
        <button class="b d" title="Fillet"><svg><use href="#fillet"/></svg></button>
        <button class="b d" title="Spline"><svg><use href="#spline"/></svg></button>
        <button class="b d" title="Primitive"><svg><use href="#cyl"/></svg></button>
      </div>
      <div class="grp">
        <button class="b" title="Trim"><svg><use href="#trim"/></svg></button>
        <button class="b d" title="Break"><svg><use href="#brk"/></svg></button>
      </div>
      <div class="grp">
        <button class="b" title="Translate"><svg><use href="#xmove"/></svg></button>
        <button class="b" title="Rotate"><svg><use href="#xrot"/></svg></button>
        <button class="b" title="Mirror"><svg><use href="#xmir"/></svg></button>
        <button class="b" title="Scale"><svg><use href="#xscale"/></svg></button>
        <button class="b" title="Project"><svg><use href="#xoff"/></svg></button>
        <i class="sep"></i>
        <button class="b d" title="Offset"><svg><use href="#xroll"/></svg></button>
        <button class="b" title="Array"><svg><use href="#xarr"/></svg></button>
        <button class="b d" title="Drag"><svg><use href="#xdrag"/></svg></button>
      </div>
      <div class="grp">
        <button class="b d" title="Drafting"><svg><use href="#bulb"/></svg></button>
        <button class="b" title="Leader"><svg><use href="#arrdash"/></svg></button>
      </div>
      <div class="grp">
        <button class="b" title="Net surface"><svg><use href="#snet"/></svg></button>
        <button class="b" title="Ruled surface"><svg><use href="#sruled"/></svg></button>
        <button class="b" title="Revolved surface"><svg><use href="#srev"/></svg></button>
        <button class="b" title="Swept surface"><svg><use href="#ssweep"/></svg></button>
        <button class="b d" title="Trim surface"><svg><use href="#strim"/></svg></button>
        <i class="sep"></i>
        <button class="b d" title="Rough"><svg><use href="#m1"/></svg></button>
        <button class="b d" title="Finish"><svg><use href="#m2"/></svg></button>
        <button class="b d" title="Drill"><svg><use href="#m3"/></svg></button>
      </div>
      <div class="grp">
        <button class="b d" title="Machine"><svg><use href="#mtool"/></svg></button>
      </div>
    </div>

    <div class="bar bar3">
      <div class="coords">
        <div class="coord"><button class="key"><u>X</u></button><span class="combo off"><input aria-label="X" value="30.74127" disabled></span></div>
        <div class="coord"><button class="key"><u>Y</u></button><span class="combo off"><input aria-label="Y" value="-47.04731" disabled></span></div>
        <div class="coord"><button class="key"><u>Z</u></button><span class="combo off"><input aria-label="Z" value="0.0" disabled></span></div>
        <div class="set">
          <button class="f" title="Fast point" disabled><svg><use href="#gfast"/></svg></button>
          <button class="f" title="Relative" disabled><svg><use href="#gexc"/></svg></button>
          <button class="f" title="Config" disabled><svg><use href="#gblk"/></svg></button>
          <button class="f slim" title="More" disabled></button>
          <button class="f on" title="Help"><svg><use href="#quest"/></svg></button>
        </div>
      </div>
      <div class="select">
        <button class="txt">All...</button>
        <button class="txt">Only...</button>
        <button class="f on" title="Options"><svg><use href="#magic"/></svg></button>
        <span class="combo"><select aria-label="Selection"><option>In</option></select></span>
        <div class="set">
          <button class="b d" title="Window"><svg><use href="#gbox"/></svg></button>
          <button class="f" title="Select" disabled><svg><use href="#gcur"/></svg></button>
          <button class="f" title="Solid" disabled><svg><use href="#ghexp"/></svg></button>
        </div>
        <div class="set">
          <button class="f" title="Edge" disabled><svg><use href="#ghex"/></svg></button>
          <button class="f" title="Face" disabled><svg><use href="#ghex"/></svg></button>
          <button class="f" title="Body" disabled><svg><use href="#ghex"/></svg></button>
        </div>
        <div class="set">
          <button class="f" title="Back" disabled><svg><use href="#gcube"/></svg></button>
          <button class="f" title="Last" disabled><svg><use href="#gback"/></svg></button>
        </div>
        <button class="f on" title="Verify"><svg><use href="#selok"/></svg></button>
        <div class="set">
          <button class="f" title="Unselect" disabled><svg><use href="#gno"/></svg></button>
          <button class="f" title="End" disabled><svg><use href="#gdot"/></svg></button>
        </div>
        <button class="f on" title="Help"><svg><use href="#quest"/></svg></button>
      </div>
    </div>

    <div class="ribbon">Ribbon Bar</div>

    <main>
      <aside class="side left">
        <div class="vgrp">
          <button class="v" title="Extrude"><svg><use href="#sext"/></svg></button>
          <button class="v" title="Revolve"><svg><use href="#srevo"/></svg></button>
          <button class="v" title="Sweep"><svg><use href="#sswp"/></svg></button>
          <button class="v" title="Loft"><svg><use href="#sloft"/></svg></button>
          <button class="v d" title="Fillet"><svg><use href="#sfil"/></svg></button>
          <hr>
          <button class="v" title="Shell"><svg><use href="#sshl"/></svg></button>
          <button class="v d" title="Boolean"><svg><use href="#sbool"/></svg></button>
          <button class="v" title="Draft"><svg><use href="#sdraft"/></svg></button>
          <button class="v" title="Thicken"><svg><use href="#sthk"/></svg></button>
          <button class="v" title="Check"><svg><use href="#schk"/></svg></button>
          <hr>
          <button class="v" title="Remove faces"><svg><use href="#slift"/></svg></button>
          <button class="v" title="From surfaces"><svg><use href="#sgrid"/></svg></button>
          <button class="v" title="Find features"><svg><use href="#sdwn"/></svg></button>
          <button class="v" title="Layout"><svg><use href="#slay"/></svg></button>
        </div>
      </aside>

      <section class="ops">
        <div class="opshead"><h2>Operations Manager</h2><button class="x">X</button></div>
        <div class="tabs">
          <button class="tab active">Toolpaths</button><button class="tab">Solids</button><button class="tab">Art</button>
          <button class="x down" title="Tabs"></button>
        </div>
        <div class="opsbar">
          <button class="b" title="Select all" disabled><svg><use href="#ochk"/></svg></button>
          <button class="b" title="Select dirty" disabled><svg><use href="#ochx"/></svg></button>
          <i class="sep"></i>
          <button class="b" title="Regenerate" disabled><svg><use href="#otp"/></svg></button>
          <button class="b" title="Regenerate dirty" disabled><svg><use href="#otx"/></svg></button>
          <i class="sep"></i>
          <button class="b" title="Backplot" disabled><svg><use href="#osq"/></svg></button>
          <button class="b" title="Verify" disabled><svg><use href="#ocut"/></svg></button>
          <button class="b g1" disabled>G1</button>
          <button class="b" title="High feed" disabled><svg><use href="#otr"/></svg></button>
          <i class="sep"></i>
          <button class="b" title="Delete all" disabled><svg><use href="#oedit"/></svg></button>
          <i class="sep"></i>
          <button class="b" title="Help" disabled><svg><use href="#oq"/></svg></button>
        </div>
        <div class="opsbar">
          <button class="b" title="Lock" disabled><svg><use href="#olock"/></svg></button>
          <button class="b" title="Toggle display" disabled><svg><use href="#owave"/></svg></button>
          <button class="b" title="Ghost" disabled><svg><use href="#oghost"/></svg></button>
          <i class="sep"></i>
          <button class="b" title="Move down" disabled><svg><use href="#odn"/></svg></button>
          <button class="b" title="Move up" disabled><svg><use href="#oup"/></svg></button>
          <button class="b" title="Insert" disabled><svg><use href="#oins"/></svg></button>
          <button class="b" title="Scroll" disabled><svg><use href="#oscr"/></svg></button>
          <i class="sep"></i>
          <button class="b" title="Only selected" disabled><svg><use href="#owavex"/></svg></button>
          <button class="b" title="Only geometry" disabled><svg><use href="#oov"/></svg></button>
        </div>
        <div class="treebox">
          <ul class="tree">
            <li><div class="node"><i class="ex"></i><svg><use href="#tgrp"/></svg><span>Machine Group-1</span></div>
              <ul>
                <li><div class="node"><i class="ex more"></i><svg><use href="#tprop"/></svg><span>Properties - Generic Mill</span></div></li>
                <li><div class="node"><i class="ex"></i><svg><use href="#ttp"/></svg><span>Toolpath Group-1</span></div>
                  <ul>
                    <li><div class="node"><i class="ex"></i><svg><use href="#tfold"/></svg><span class="sel">1 - Surface Finish Parallel - [WCS: T</span></div>
                      <ul>
                        <li><div class="node"><i></i><svg><use href="#tpar"/></svg><span>Parameters</span></div></li>
                        <li><div class="node"><i></i><svg><use href="#ttool"/></svg><span>#1 - M8.00 ENDMILL2 SPHERE</span></div></li>
                        <li><div class="node"><i class="ex more"></i><svg><use href="#tgeo"/></svg><span>Geometry -</span></div></li>
                        <li><div class="node"><i></i><svg><use href="#twave"/></svg><span>Toolpath - 51.5K - T.NC - Progra</span></div></li>
                      </ul>
                    </li>
                    <li><div class="node"><i></i><svg><use href="#tarr"/></svg></div></li>
                  </ul>
                </li>
              </ul>
            </li>
          </ul>
          <div class="hscroll">
            <button title="Left"><svg viewBox="0 0 16 16"><path d="M10 4L6 8l4 4" fill="none" stroke="#4d6185" stroke-width="2.500"/></svg></button>
            <div class="thumb"><i></i></div>
            <button title="Right"><svg viewBox="0 0 16 16"><path d="M6 4l4 4-4 4" fill="none" stroke="#4d6185" stroke-width="2.500"/></svg></button>
          </div>
        </div>
      </section>

      <section class="view">
        <svg viewBox="342 170 907 736" preserveAspectRatio="xMinYMin slice">
          <!-- toolpath passes: one thick dashed stroke in the sheared frame of the floor -->
          <g transform="matrix(474 86 -163 135 667 417)">
            <path class="passes" d="M0 .5H1"/>
          </g>
          <path class="edge" d="M667 417.500L1141 503.500M504 552.500L977 638.500"/>
          <g class="part">
            <path d="M408.500 411.500L571.500 275.500L637.500 279.500L475.500 415.500zM408.500 411V906M571.500 275V906M637.500 279V413M475.500 415V549"/>
            <path d="M475.500 548.500L637.500 412.500L1170.500 508.500L1007.500 643.500z"/>
            <path d="M1007.500 441.500L1170.500 305.500L1237.500 308.500L1074.500 444.500zM1007.500 441V644M1170.500 305V508M1074.500 445V906M1237.500 308V906"/>
          </g>
          <g class="tool">
            <path d="M640.500 169V391M657.500 169V392M661.500 169V396M667.500 169V417M688.500 169V395M691.500 169V395M977.500 169V638"/>
            <ellipse cx="667.500" cy="391" rx="27" ry="5.500"/>
            <path d="M640.500 391C641 407 655 418 667 418C680 418 690 410 691.500 394M657.500 392C658 402 663 413 667 418M661.500 396C663 408 665 414 667 418M688.500 394C686 408 678 416 667 418"/>
            <path d="M447 386.500H472M459.500 374V399"/>
          </g>
          <path class="lead" d="M524 430L717 682M1037 528L726 683M783 375L745 470"/>
          <path class="note" d="M767 343h63v32h-63zM686 682h81v33h-81z"/>
          <text class="notetext" x="767" y="353">加工曲面</text>
          <text class="notetext" x="686" y="692">干涉曲面</text>
          <path class="part" d="M822.500 339v4M830 360.500h10"/>
          <text class="g" x="818" y="333">Z</text><text class="g" x="845" y="365">Y</text>
          <g id="axes">
            <path d="M382.500 209V230" stroke="#0000c8"/><path class="part" d="M383 230.500h17"/>
            <text class="z" x="377" y="203">Z</text><text class="g" x="405" y="235">Y</text><text class="r" x="370" y="239">X</text>
          </g>
          <use href="#axes" x="807"/>
          <use href="#axes" y="636"/>
          <text class="w" x="378" y="245">C</text><text class="w" x="1185" y="245">T</text>
          <text class="info" x="348" y="895">Gview:Not Saved</text><text class="info" x="451" y="895">WCS:TOP</text><text class="info" x="516" y="895">T/Cplane:TOP</text>
          <path class="scale" d="M1129.500 870v25M1225.500 870v25M1129 882.500h96"/>
          <text class="num" x="1172" y="875">14.005</text>
          <text class="unit" x="1170" y="894">Metric</text>
        </svg>
      </section>

      <aside class="side right">
        <div class="vgrp">
          <button class="v" title="Fit"><svg><use href="#fit"/></svg></button>
          <button class="v" title="Wireframe"><svg><use href="#globe"/></svg></button>
          <button class="v" title="Shaded"><svg><use href="#ball"/></svg></button>
          <button class="v" title="Isometric"><svg><use href="#wire"/></svg></button>
          <button class="v" title="Zoom"><svg><use href="#ztar"/></svg></button>
          <button class="v" title="Right"><svg><use href="#cright"/></svg></button>
        </div>
        <div class="vgrp quick">
          <button class="v" title="Points"><svg><use href="#qplus"/></svg></button>
          <button class="v" title="Lines"><svg><use href="#qline"/></svg></button>
          <button class="v" title="Arcs"><svg><use href="#qcirc"/></svg></button>
          <button class="v" title="Splines"><svg><use href="#qspl"/></svg></button>
          <button class="v" title="Surfaces"><svg><use href="#qnet"/></svg></button>
          <button class="v" title="Solids"><svg><use href="#qsol"/></svg></button>
          <button class="v" title="Wireframes"><svg><use href="#qglobe"/></svg></button>
          <hr>
          <button class="v" title="Result"><svg><use href="#qc1"/></svg></button>
          <button class="v" title="Group"><svg><use href="#qc2"/></svg></button>
          <hr>
          <button class="v" title="Color"><svg><use href="#qpal"/></svg></button>
          <button class="v" title="Level"><svg><use href="#qlev"/></svg></button>
          <hr>
          <button class="v" title="Drafting"><svg><use href="#qdim"/></svg></button>
          <button class="v" title="Surface"><svg><use href="#qsurf"/></svg></button>
        </div>
      </aside>
    </main>

    <footer class="status">
      <span class="help">For help, press Alt+H.</span>
      <button class="s s3d">3D</button>
      <button class="s gview">Gview</button>
      <button class="s planes">Planes</button>
      <label for="depth" class="zl">Z</label>
      <span class="combo depth"><input id="depth" value="0.0"></span>
      <button class="color">10</button><i class="tri"></i>
      <label for="level" class="ll">Level</label>
      <span class="combo level"><input id="level" value="2"></span>
      <button class="s attr">Attributes</button>
      <span class="combo star"><select aria-label="Point style"><option>✳</option></select></span>
      <span class="combo ln"><select aria-label="Line style"></select><i class="thick"></i></span>
      <span class="combo ln"><select aria-label="Line width"></select><i></i></span>
      <button class="s wcs">WCS</button>
      <button class="s groups">Groups</button>
      <button class="s one">!</button>
      <button class="s one">?</button>
    </footer>

    <footer class="taskbar">
      <button class="start"><svg><use href="#win"/></svg>开始</button>
      <div class="ql"><svg class="i"><use href="#bird"/></svg><svg class="i"><use href="#desk"/></svg></div>
      <div class="tasks">
        <button class="task"><svg class="i"><use href="#folder"/></svg>F:\xz\<span>迅雷</span>5.7.5.421</button>
        <button class="task"><svg class="i"><use href="#ie"/></svg>[<span>求助</span>]<span>干涉曲面设</span>...</button>
        <button class="task"><svg class="i"><use href="#media"/></svg><span>酷热影音</span></button>
        <button class="task current"><svg class="i"><use href="#mcx"/></svg>Mastercam Mill X...</button>
        <button class="task"><svg class="i"><use href="#folder"/></svg>D:\<span>截屏文件</span></button>
      </div>
      <div class="langs"><svg class="i"><use href="#kbd"/></svg><svg class="i"><use href="#qm"/></svg><svg class="i"><use href="#lang"/></svg></div>
      <div class="tray">
        <button class="exp" title="Show hidden icons"><svg viewBox="0 0 16 16"><path d="M10 4L6 8l4 4" fill="none" stroke="#fff" stroke-width="2"/></svg></button>
        <svg class="i"><use href="#vol"/></svg><svg class="i"><use href="#wall"/></svg><time>17:46</time>
      </div>
    </footer>
  </body>
</html>
```
FILE: styles.css
```css
* { box-sizing: border-box; }
html, body { height: 100%; margin: 0; }
body {
    display: flex; flex-direction: column; overflow: hidden;
    background: #ece9d8; color: #000;
    font-family: 'Liberation Sans', 'Noto Sans CJK SC', sans-serif; font-size: 11px;
}
button, input, select { font: inherit; color: inherit; margin: 0; padding: 0; border: 0; background: none; border-radius: 0; }
h1, h2 { margin: 0; font-weight: normal; }
svg { display: block; }
.sprite { position: absolute; width: 0; height: 0; }
.i { width: 16px; height: 16px; flex: none; }

/* title bar */
.title {
    display: flex; align-items: center; height: 26px; flex: none; padding: 0 2px; gap: 2px;
    background: linear-gradient(#3c96ff 0, #0a62f0 3px, #0054e3 10px, #0464ff 20px, #0050d8 26px);
}
.title h1 {
    flex: 1; margin-left: 2px; color: #fff; white-space: nowrap; text-shadow: 1px 1px #0a2a80;
    font: bold 13px 'Liberation Mono', 'Noto Sans CJK SC', monospace;
}
.title h1 span { font-size: 14px; }
.wb {
    width: 21px; height: 21px; padding: 1px; border: 1px solid #fff; border-radius: 3px;
    background: linear-gradient(135deg, #6c9cf4, #1c4cd0);
}
.wb.close { background: linear-gradient(135deg, #f09070, #c83008); }

.menu {
    position: relative; display: flex; align-items: center; gap: 12px; flex: none;
    height: 21px; padding-left: 5px; border-bottom: 1px solid #aca899;
    font: 10px 'Liberation Mono', monospace;
}
.menu a { color: #000; text-decoration: none; }
.meter {
    position: absolute; left: 1100px; top: 2px; width: 36px; height: 36px; z-index: 2;
    padding-top: 3px; text-align: center; color: #fff;
    background: rgba(44, 104, 164, .92); border: 1px solid #245080;
}

/* tool bars */
.bar { display: grid; flex: none; height: 30px; border-top: 1px solid #fff; border-bottom: 1px solid #aca899; }
.bar1 { grid-template-columns: 191fr 77fr 336fr 135fr 71fr 124fr 162fr 184fr; }
.bar2 { grid-template-columns: 387fr 100fr 307fr 100fr 335fr 51fr; }
.bar3 { grid-template-columns: 562fr 718fr; height: 31px; }
.grp {
    position: relative; justify-self: start; display: flex; align-items: center;
    padding: 0 3px 0 10px; border-left: 1px solid #aca899; border-right: 1px solid #aca899;
}
.grp:first-child { border-left-color: transparent; }
.grp::before, .select::before {
    content: ''; position: absolute; left: 3px; top: 4px; bottom: 4px; width: 3px;
    border-left: 1px solid #fff; border-right: 1px solid #aca899;
}
.b { display: flex; align-items: center; width: 23px; height: 24px; padding-left: 2px; }
.b svg { flex: none; width: 18px; height: 18px; }
.d::after {
    content: ''; margin-left: 6px; border: 4px solid transparent; border-top-color: #000; border-bottom: 0;
}
.b.d { width: 36px; }
.b.d:disabled::after { border-top-color: #aca899; }
.sep { width: 8px; height: 22px; background: linear-gradient(90deg, transparent 3px, #c8c4b4 3px, #c8c4b4 4px, transparent 4px); }

.coords, .select { position: relative; display: flex; align-items: center; justify-self: start; background: #ffffcc; border-right: 1px solid #aca899; }
.coords { padding: 0 8px 0 6px; }
.coord { display: flex; gap: 6px; }
.coord + .coord { margin-left: 12px; }
.select { gap: 9px; padding: 0 8px 0 13px; border-left: 1px solid #aca899; }
.set { display: flex; gap: 1px; }
.coords .set { gap: 2px; margin-left: 6px; }
.key { width: 21px; height: 21px; border: 1px solid #d8d4c0; border-radius: 3px; background: #f4f3ec; font-size: 13px; }
.txt { width: 45px; height: 21px; border: 1px solid #003c74; border-radius: 3px; background: linear-gradient(#fff, #e8e6dc); }
.f {
    display: flex; align-items: center; justify-content: center;
    width: 22px; height: 21px; background: #ece9d8; border: 1px solid #e0dcc8;
}
.f svg { width: 18px; height: 18px; }
.f.on { border: 1px solid #003c74; border-radius: 3px; background: #f0f4fa; }
.slim { width: 12px; }
.slim::after { content: ''; border: 3px solid transparent; border-top-color: #aca899; border-bottom: 0; }
.coords .on { margin-left: 2px; }
.select .b.d { width: 35px; height: 21px; background: #ece9d8; }

.combo { position: relative; display: flex; width: 72px; height: 21px; background: #fff; border: 1px solid #7f9db9; }
.combo input, .combo select { flex: 1; min-width: 0; width: 100%; padding-left: 2px; appearance: none; outline: 0; }
.combo::after {
    content: ''; flex: none; width: 15px; margin: 1px;
    background: #c1d3fb url("data:image/svg+xml,%3Csvg xmlns='http://www.w3.org/2000/svg' viewBox='0 0 15 17'%3E%3Cpath d='M4 7l4 4 4-4' fill='none' stroke='%234d6185' stroke-width='2.5'/%3E%3C/svg%3E") center / 15px 17px no-repeat;
}
.combo.off { background: #f0eedf; border-color: #d0ccb8; color: #aca899; }
.combo.off::after { filter: grayscale(1) opacity(.35); }
.select .combo { width: 75px; }

.ribbon { flex: none; height: 31px; padding-left: 187px; line-height: 31px; border-bottom: 1px solid #aca899; }

/* middle */
main { flex: 1; min-height: 0; display: flex; }
.side { flex: none; }
.left { width: 43px; border-right: 1px solid #aca899; }
.right { width: 31px; padding-top: 4px; border-left: 2px solid #fff; }
.vgrp { position: relative; padding: 12px 0 4px 3px; border-bottom: 1px solid #aca899; }
.right .vgrp { padding-left: 2px; padding-top: 11px; height: 236px; border-top: 1px solid #aca899; }
.right .quick { height: auto; margin-top: 57px; }
.vgrp::before {
    content: ''; position: absolute; left: 4px; right: 4px; top: 5px; height: 3px;
    border-top: 1px solid #fff; border-bottom: 1px solid #aca899;
}
.v { display: flex; align-items: center; width: 38px; height: 22px; padding-left: 2px; }
.right .v { width: 25px; padding-left: 3px; }
.v svg { flex: none; width: 18px; height: 18px; }
.vgrp hr { height: 2px; margin: 3px 5px 4px 2px; border: 0; border-top: 1px solid #aca899; border-bottom: 1px solid #fff; }
.right hr { margin: 3px 4px 3px 2px; }

.ops { flex: none; display: flex; flex-direction: column; width: 298px; padding: 1px 6px 5px 1px; border-right: 1px solid #aca899; }
.opshead { display: flex; align-items: center; justify-content: space-between; height: 18px; padding-left: 2px; background: #d6d2ca; }
.opshead h2 { font-size: 11px; }
.x {
    display: flex; align-items: center; justify-content: center; width: 15px; height: 15px;
    border: 1px solid #003c74; border-radius: 3px; background: #fff;
}
.down { margin: 2px 0 0 auto; }
.down::after, .tri { content: ''; border: 4px solid transparent; border-top-color: #000; border-bottom: 0; }
.tabs { display: flex; align-items: flex-start; height: 20px; font: 10px 'Liberation Mono', monospace; border-bottom: 1px solid #919b9c; }
.tab {
    height: 17px; margin-top: 2px; padding: 2px 4px 0; min-width: 46px; text-align: left;
    border: 1px solid #919b9c; border-bottom: 0; border-radius: 3px 3px 0 0; background: #f8f7f2;
}
.tab.active { height: 20px; margin-top: 0; padding: 0 7px 0 4px; border-top: 3px solid #ffb030; background: #fcfcfa; }
.opsbar { display: flex; align-items: center; height: 31px; margin-right: 10px; padding-left: 6px; border-top: 1px solid #aca899; }
.opsbar .b { justify-content: center; padding: 0; }
.opsbar .b svg { width: 17px; height: 17px; }
.opsbar .sep { width: 6px; }
.tabs + .opsbar { margin-top: 3px; }
.g1 { color: #aca899; font: bold 13px 'Liberation Serif', serif; }

.treebox { flex: 1; min-height: 0; display: flex; flex-direction: column; margin: 7px 0 0 2px; background: #fff; border: 1px solid #7f9db9; font-size: 13px; }
.tree { flex: 1; overflow: hidden; }
.treebox ul { list-style: none; margin: 0; padding: 0; }
.treebox .tree { padding-left: 9px; }
.treebox .tree ul { padding-left: 19px; }
.tree li { position: relative; }
.tree ul li::before { content: ''; position: absolute; left: 4px; top: 0; bottom: 0; border-left: 1px dotted #000; }
.tree ul li:last-child::before { bottom: auto; height: 10px; }
.tree ul li::after { content: ''; position: absolute; left: 4px; top: 9px; width: 10px; border-top: 1px dotted #000; }
.node { display: flex; align-items: center; height: 18px; white-space: nowrap; }
.node i { width: 9px; height: 9px; flex: none; margin-right: 5px; }
.node .ex {
    z-index: 1; border: 1px solid #848484;
    background: linear-gradient(#000, #000) center / 5px 1px no-repeat, #fff;
}
.node .more { background: linear-gradient(#000, #000) center / 5px 1px no-repeat, linear-gradient(#000, #000) center / 1px 5px no-repeat, #fff; }
.node svg { width: 16px; height: 16px; flex: none; margin-right: 4px; z-index: 1; }
.node span { padding: 0 2px; line-height: 18px; }
.sel { background: #316ac5; color: #fff; }
.hscroll { display: flex; flex: none; height: 17px; background: #f3f1ec; }
.hscroll button { width: 17px; background: #c8d6fb; border: 1px solid #fff; border-radius: 2px; }
.thumb {
    display: flex; align-items: center; justify-content: center; width: 60%; margin: 0 auto 0 1px;
    background: linear-gradient(#d0dcfd, #b8ccfa); border: 1px solid #98b0e8; border-radius: 2px;
}
.thumb i { width: 8px; height: 6px; background: repeating-linear-gradient(90deg, #8ca8e8 0, #8ca8e8 1px, #eef 1px, #eef 2px); }

/* graphics window */
.view { flex: 1; min-width: 0; background: #000099; border-top: 1px solid #000020; border-left: 1px solid #000020; overflow: hidden; }
.view > svg { width: 100%; height: 100%; }
.view path, .view ellipse { fill: none; stroke-width: 1; shape-rendering: crispEdges; }
.view .passes { stroke: #38c8f0; stroke-dasharray: .0022 .0047; }
.edge { stroke: #30e0c0; }
.part, .part path { stroke: #3cc878; }
.tool { stroke: #f0f0e8; fill: none; }
.lead { stroke: #d81030; }
.view .note { fill: #fff; }
.view text { font-size: 12px; }
.view .notetext { fill: #d81010; font-family: 'Noto Sans CJK SC', sans-serif; }
.view .g { fill: #30d850; font-weight: bold; }
.view .z { fill: #0000c8; font-weight: bold; }
.view .r { fill: #e81018; font-weight: bold; font-size: 13px; }
.view .w { fill: #c8c8f8; }
.view .info { fill: #b8b8f0; font-weight: bold; font-size: 11px; }
.scale { stroke: #e8e860; }
.num, .unit { text-anchor: middle; font-weight: bold; }
.num { fill: #20e840; }
.unit { fill: #b8b8f0; }

/* status bar */
.status {
    display: flex; align-items: center; flex: none; height: 24px; padding: 3px 0 0 2px; overflow: hidden;
    border-top: 1px solid #aca899; box-shadow: inset 0 1px #fff;
    font: 10px 'Liberation Mono', monospace; white-space: nowrap;
}
.help { flex: 0 0 25%; }
.s { flex: none; height: 17px; margin-left: 5px; border: 1px solid #d4d0be; border-radius: 3px; background: #f4f2e8; }
.s3d { width: 27px; }
.gview { width: 56px; }
.planes { width: 41px; }
.attr { width: 75px; margin-left: 6px; }
.wcs { width: 43px; }
.groups { width: 63px; margin-left: 7px; }
.one { width: 20px; margin-left: 6px; }
.status .combo { flex: none; height: 19px; }
.zl { flex: none; width: 6px; margin-left: 15px; }
.status .depth { width: 113px; background: #ffff80; }
.depth input { padding: 0; color: #fff; background: linear-gradient(90deg, #316ac5 20px, transparent 20px) 0 center / 100% 13px no-repeat; }
.color { flex: none; width: 55px; height: 18px; margin-left: 4px; background: #00ff00; color: #206020; }
.tri { flex: none; border-width: 5px 5px 0; margin: 0 14px 0 3px; }
.ll { flex: none; width: 31px; }
.status .level { width: 150px; }
.status .star { width: 33px; margin-left: 5px; }
.star select { padding: 0; text-align: center; font-size: 13px; }
.status .ln { width: 64px; margin-left: 4px; }
.ln i { position: absolute; left: 2px; top: 8px; width: 42px; height: 1px; background: #000; }
.ln .thick { height: 3px; top: 7px; }

/* task bar */
.taskbar {
    display: flex; flex: none; height: 30px; overflow: hidden; color: #fff;
    background: linear-gradient(#4a8cf4 0, #2860dc 4px, #245cdc 24px, #1c48b0 30px);
    font: 10px 'Liberation Mono', 'Noto Sans CJK SC', monospace;
}
.start {
    display: flex; align-items: center; gap: 10px; width: 96px; padding-left: 10px;
    border-radius: 0 10px 12px 0; box-shadow: inset -2px 0 3px #1c5c1c;
    background: linear-gradient(#68b468 0, #3c983c 5px, #389038 22px, #286c28 30px);
    font: italic 18px 'Noto Sans CJK SC', sans-serif; text-shadow: 1px 1px #205020;
}
.start svg { width: 18px; height: 18px; }
.ql, .langs, .tray { display: flex; align-items: center; gap: 6px; flex: none; }
.ql { width: 94px; padding-left: 13px; }
.tasks { flex: 1; display: grid; grid-template-columns: repeat(5, 159px); gap: 1px; padding-top: 3px; }
.task {
    display: flex; align-items: center; height: 25px; padding-left: 10px; white-space: pre; overflow: hidden;
    border: 1px solid #2c64d4; border-radius: 3px; background: linear-gradient(#5c9cfc 0, #3c80f4 4px, #3478f0 25px);
}
.task .i { margin-right: 3px; }
.task span { font-size: 12px; }
.task.current { background: #1c4cae; border-color: #123a8c; }
.langs { padding-right: 26px; }
.tray { padding: 0 14px 0 0; gap: 1px; background: linear-gradient(#18b0f8 0, #1290e8 5px, #1290e8 24px, #0c6cc0 30px); border-left: 1px solid #0c4898; }
.exp { width: 17px; height: 17px; margin: 0 2px 0 -8px; border-radius: 50%; background: radial-gradient(#5cb0ff, #1c64d8); }
.tray time { margin-left: 6px; }
```
